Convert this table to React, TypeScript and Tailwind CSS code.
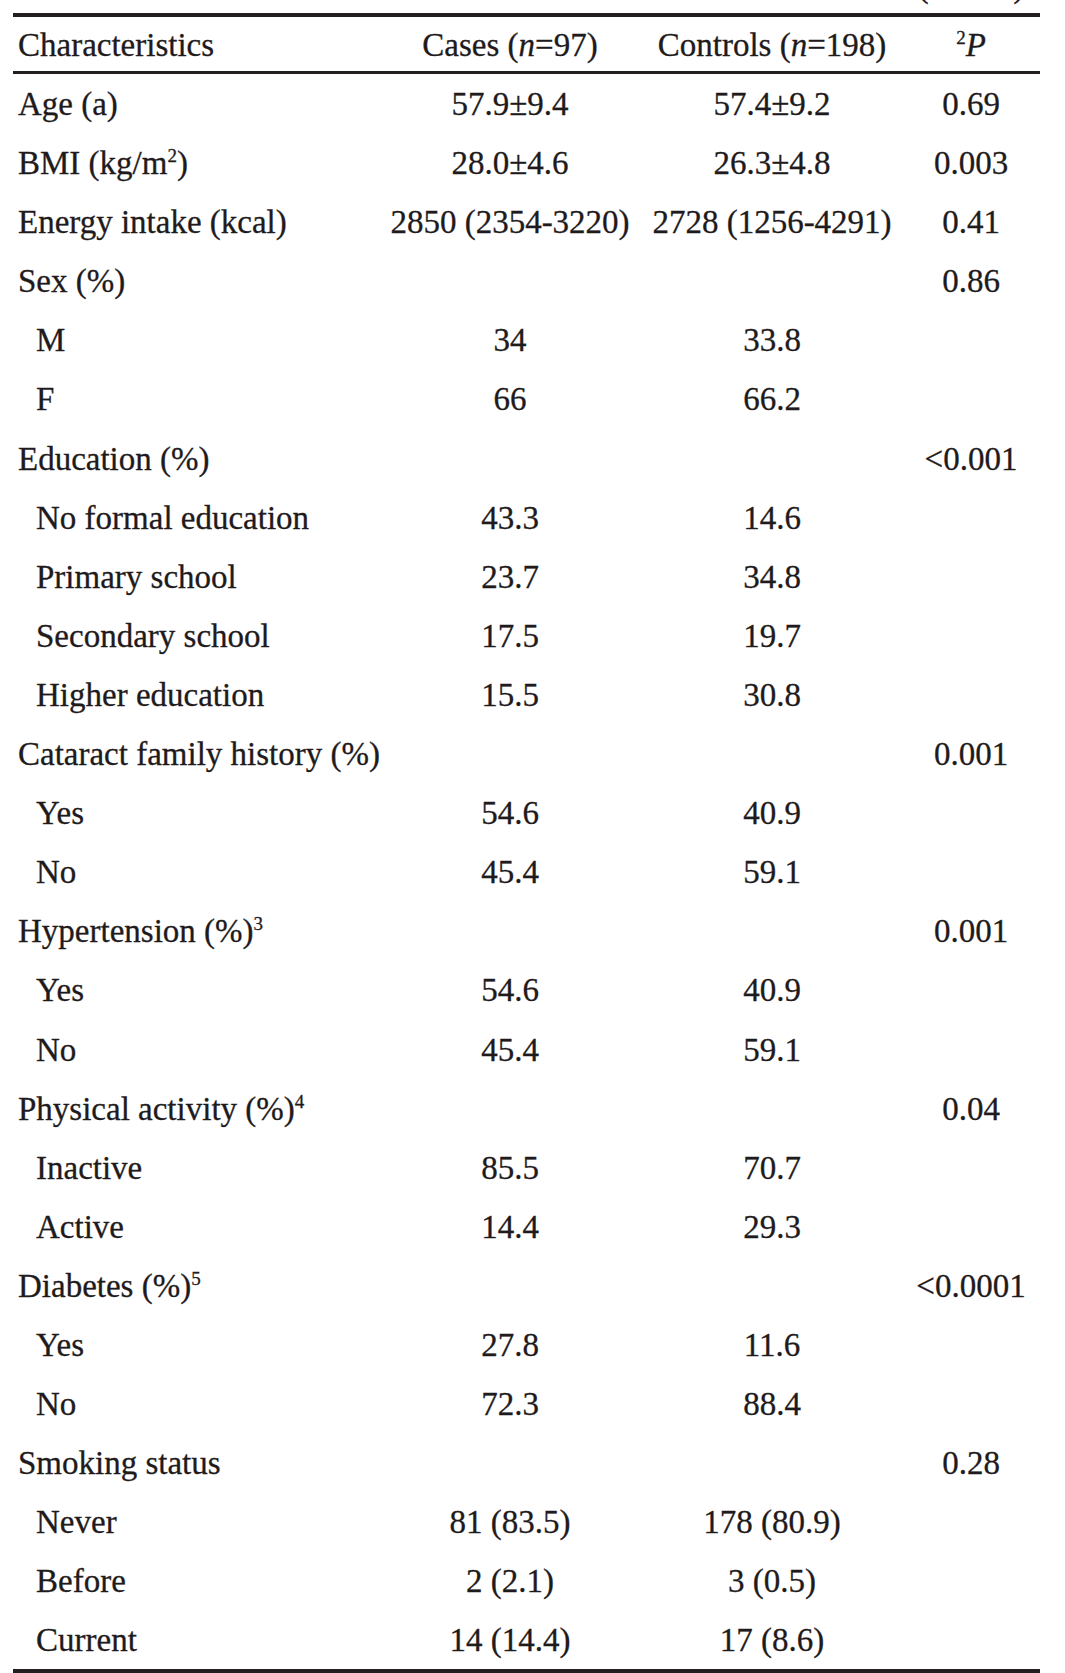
import type { ReactNode } from "react";

type Row = {
  label: ReactNode;
  cases?: string;
  controls?: string;
  p?: string;
  sub?: boolean;
};

const Sup = ({ children }: { children: ReactNode }) => (
  <span className="text-[19px] leading-none align-[12px]">{children}</span>
);

const rows: Row[] = [
  { label: "Age (a)", cases: "57.9±9.4", controls: "57.4±9.2", p: "0.69" },
  {
    label: (
      <>
        BMI (kg/m<Sup>2</Sup>)
      </>
    ),
    cases: "28.0±4.6",
    controls: "26.3±4.8",
    p: "0.003",
  },
  {
    label: "Energy intake (kcal)",
    cases: "2850 (2354-3220)",
    controls: "2728 (1256-4291)",
    p: "0.41",
  },
  { label: "Sex (%)", p: "0.86" },
  { label: "M", cases: "34", controls: "33.8", sub: true },
  { label: "F", cases: "66", controls: "66.2", sub: true },
  { label: "Education (%)", p: "<0.001" },
  { label: "No formal education", cases: "43.3", controls: "14.6", sub: true },
  { label: "Primary school", cases: "23.7", controls: "34.8", sub: true },
  { label: "Secondary school", cases: "17.5", controls: "19.7", sub: true },
  { label: "Higher education", cases: "15.5", controls: "30.8", sub: true },
  { label: "Cataract family history (%)", p: "0.001" },
  { label: "Yes", cases: "54.6", controls: "40.9", sub: true },
  { label: "No", cases: "45.4", controls: "59.1", sub: true },
  {
    label: (
      <>
        Hypertension (%)<Sup>3</Sup>
      </>
    ),
    p: "0.001",
  },
  { label: "Yes", cases: "54.6", controls: "40.9", sub: true },
  { label: "No", cases: "45.4", controls: "59.1", sub: true },
  {
    label: (
      <>
        Physical activity (%)<Sup>4</Sup>
      </>
    ),
    p: "0.04",
  },
  { label: "Inactive", cases: "85.5", controls: "70.7", sub: true },
  { label: "Active", cases: "14.4", controls: "29.3", sub: true },
  {
    label: (
      <>
        Diabetes (%)<Sup>5</Sup>
      </>
    ),
    p: "<0.0001",
  },
  { label: "Yes", cases: "27.8", controls: "11.6", sub: true },
  { label: "No", cases: "72.3", controls: "88.4", sub: true },
  { label: "Smoking status", p: "0.28" },
  { label: "Never", cases: "81 (83.5)", controls: "178 (80.9)", sub: true },
  { label: "Before", cases: "2 (2.1)", controls: "3 (0.5)", sub: true },
  { label: "Current", cases: "14 (14.4)", controls: "17 (8.6)", sub: true },
];

const cols = "grid grid-cols-[365px_264px_260px_138px]";

export default function App() {
  return (
    <div
      className="w-[1065px] h-[1673px] overflow-hidden bg-white pl-[13px] text-[33px] leading-[36px] text-[#1f1b1c] [-webkit-text-stroke:0.3px_#1f1b1c]"
      style={{ fontFamily: '"Liberation Serif", "Times New Roman", serif' }}
    >
      {/* tail of the caption cut off by the crop */}
      <div className={`${cols} h-[13px] overflow-hidden`}>
        <div className="col-start-4 -mt-[32px] text-center">(n=295)</div>
      </div>

      <div className="w-[1027px] border-t-4 border-b-4 border-[#231f20]">
        <div className={`${cols} h-[57px] pt-[10px] border-b-[3px] border-[#231f20]`}>
          <div className="pl-[5px]">Characteristics</div>
          <div className="text-center">
            Cases (<i>n</i>=97)
          </div>
          <div className="text-center">
            Controls (<i>n</i>=198)
          </div>
          <div className="text-center">
            <Sup>2</Sup>
            <i>P</i>
          </div>
        </div>

        {rows.map((r, i) => (
          <div
            key={i}
            className={`${cols} pt-[12px] ${
              i === rows.length - 1 ? "h-[58.4px]" : "h-[59.1px]"
            }`}
          >
            <div className={`whitespace-nowrap ${r.sub ? "pl-[23px]" : "pl-[5px]"}`}>
              {r.label}
            </div>
            <div className="text-center whitespace-nowrap">{r.cases}</div>
            <div className="text-center whitespace-nowrap">{r.controls}</div>
            <div className="text-center whitespace-nowrap">{r.p}</div>
          </div>
        ))}
      </div>
    </div>
  );
}
